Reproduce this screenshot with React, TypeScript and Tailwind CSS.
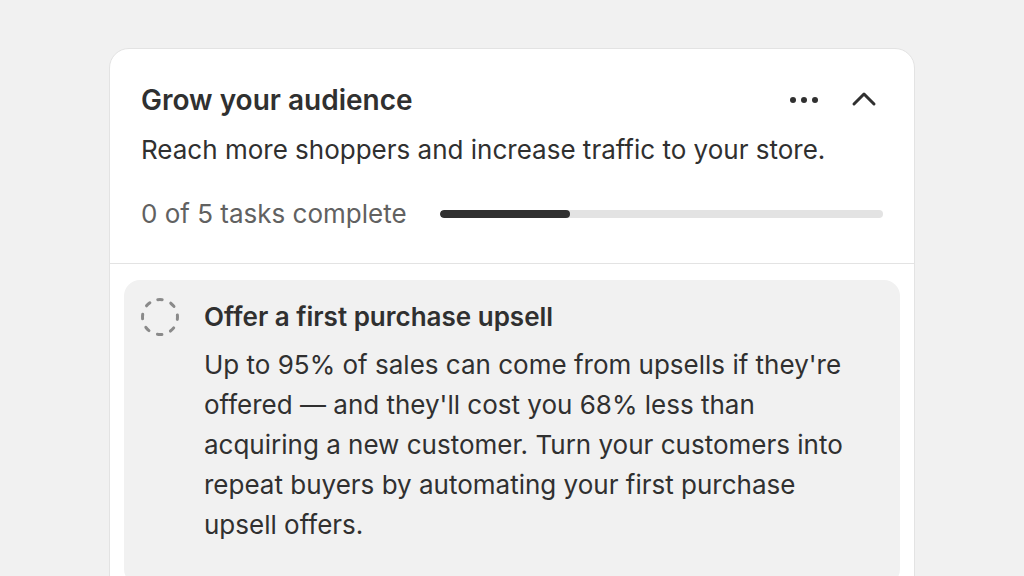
import React from "react";

export default function App() {
  const r = 17.5;
  const c = 2 * Math.PI * r;
  const seg = c / 8;
  const dash = 4.5;
  return (
    <div className="h-[576px] w-full bg-[#f1f1f1] flex justify-center pt-[48px] overflow-hidden" style={{ fontFamily: "Inter, 'Noto Sans', sans-serif" }}>
      <div className="w-[806px] h-[560px] shrink-0 bg-white border border-[#e3e3e3] rounded-t-[20px] flex flex-col">
        <div className="px-[31px] pt-[31px] pb-[29px] border-b border-[#e3e3e3] flex flex-col">
          <div className="flex items-center justify-between h-[40px]">
            <h2 className="text-[28px] leading-[40px] font-semibold text-[#303030]">Grow your audience</h2>
            <div className="flex items-center gap-[20px] -mr-[1px]">
              <svg width="40" height="40" viewBox="0 0 40 40" fill="#303030">
                <circle cx="9" cy="20" r="3" />
                <circle cx="20" cy="20" r="3" />
                <circle cx="31" cy="20" r="3" />
              </svg>
              <svg width="40" height="40" viewBox="0 0 40 40" fill="none" stroke="#303030" strokeWidth="3" strokeLinecap="round" strokeLinejoin="round">
                <path d="M10 24 L20 14 L30 24" />
              </svg>
            </div>
          </div>
          <p className="mt-[10px] text-[26px] leading-[40px] text-[#303030]">Reach more shoppers and increase traffic to your store.</p>
          <div className="mt-[24px] flex items-center gap-[33px] h-[40px]">
            <span className="text-[26px] leading-[40px] text-[#616161] whitespace-nowrap">0 of 5 tasks complete</span>
            <div className="flex-1 h-[8px] rounded-full bg-[#e3e3e3] overflow-hidden">
              <div className="h-full w-[130px] rounded-full bg-[#303030]" />
            </div>
          </div>
        </div>
        <div className="px-[14px] pt-[16px]">
          <div className="bg-[#f1f1f1] rounded-[16px] pt-[17px] pl-[16px] pr-[32px] pb-[40px] flex gap-[24px]">
            <svg width="40" height="40" viewBox="0 0 40 40" fill="none" className="shrink-0">
              <circle
                cx="20"
                cy="20"
                r={r}
                stroke="#8a8a8a"
                strokeWidth="3"
                strokeLinecap="round"
                style={{ strokeDasharray: `${dash} ${seg - dash}` }}
                transform={`rotate(${-90 - ((dash / 2) / r) * (180 / Math.PI)} 20 20)`}
              />
            </svg>
            <div className="flex flex-col">
              <h3 className="text-[26px] leading-[40px] font-semibold text-[#303030]">Offer a first purchase upsell</h3>
              <p className="mt-[8px] text-[26px] leading-[40px] text-[#303030]">
                Up to 95% of sales can come from upsells if they're offered — and they'll cost you 68% less than acquiring a new customer. Turn your customers into repeat buyers by automating your first purchase upsell offers.
              </p>
            </div>
          </div>
        </div>
      </div>
    </div>
  );
}
